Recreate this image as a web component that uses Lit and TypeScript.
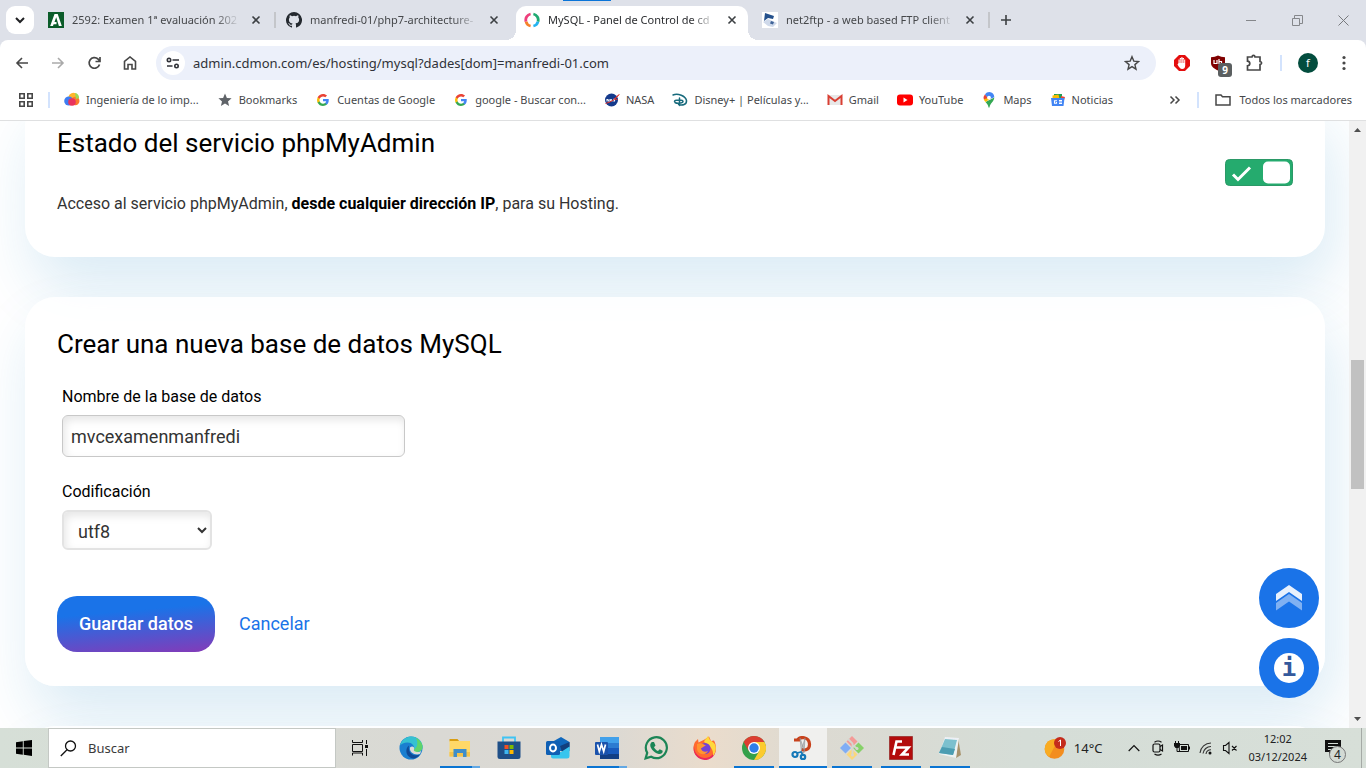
import { LitElement, html, css, svg, nothing } from "lit";
import { customElement, state } from "lit/decorators.js";
import { classMap } from "lit/directives/class-map.js";

const icon = (size: number, body: unknown, box = size) => html`<svg width=${size} height=${size} viewBox="0 0 ${box} ${box}" fill="none" aria-hidden="true">${body}</svg>`;

const googleG = () => icon(12, svg`
  <path fill="#4285f4" d="M47 24.5c0-1.600-.1-3.200-.4-4.700H24v9h12.900c-.6 3-2.300 5.500-4.800 7.200v6h7.800C44.400 38 47 31.800 47 24.500z"/>
  <path fill="#34a853" d="M24 48c6.500 0 11.900-2.100 15.900-5.800l-7.800-6c-2.100 1.500-4.900 2.300-8.100 2.300-6.200 0-11.500-4.200-13.400-9.900h-8v6.200C6.600 42.600 14.600 48 24 48z"/>
  <path fill="#fbbc05" d="M10.600 28.600a14.400 14.400 0 0 1 0-9.200v-6.200h-8a24 24 0 0 0 0 21.600z"/>
  <path fill="#ea4335" d="M24 9.500c3.500 0 6.700 1.200 9.200 3.600l6.900-6.900C35.900 2.400 30.500 0 24 0 14.600 0 6.600 5.400 2.600 13.200l8 6.200C12.500 13.700 17.800 9.500 24 9.500z"/>`, 48);

interface Tab { title: string; active?: boolean; glyph: () => unknown; }
const tabs: Tab[] = [
  { title: "2592: Examen 1ª evaluación 202", glyph: () => icon(16, svg`<path fill="#0b5c2a" d="M0 0h16v16H0z"/><path fill="#fff" d="M6.500 2h3.200l4.100 12h-2.900L8.200 5.200 6.500 10h2v2.300H5.600L5 14H2.200z"/>`) },
  { title: "manfredi-01/php7-architecture-", glyph: () => icon(16, svg`<path fill="#24292f" d="M8 0a8 8 0 0 0-2.530 15.590c.4.070.55-.17.55-.38v-1.490c-2.230.48-2.690-.94-2.690-.94-.36-.93-.89-1.170-.89-1.170-.73-.5.050-.49.050-.49.800.060 1.230.83 1.230.83.710 1.230 1.870.87 2.330.66.070-.52.280-.87.500-1.070-1.780-.2-3.640-.89-3.640-3.950 0-.87.310-1.590.82-2.150-.08-.2-.36-1.020.080-2.120 0 0 .67-.21 2.200.82a7.600 7.600 0 0 1 4 0c1.530-1.040 2.200-.82 2.200-.82.440 1.100.160 1.920.080 2.120.510.560.820 1.270.820 2.150 0 3.070-1.870 3.750-3.650 3.950.290.250.540.730.540 1.480v2.190c0 .21.150.46.550.38A8 8 0 0 0 8 0z"/>`) },
  { title: "MySQL - Panel de Control de cd", active: true, glyph: () => icon(16, svg`<g stroke-width="2.800"><path stroke="#f5822a" d="M6.600 14A6 6 0 0 1 2 9.500"/><path stroke="#ee3f7c" d="M2 9.500a6 6 0 0 1 4.600-7.500"/><path stroke="#24b3f0" d="M9.400 14a6 6 0 0 0 4.600-4.500"/><path stroke="#1fa971" d="M14 9.500A6 6 0 0 0 9.400 2"/></g>`) },
  { title: "net2ftp - a web based FTP client", glyph: () => icon(16, svg`<path fill="#fff" d="M0 0h16v16H0z"/><path fill="#24508c" d="M3 1l9 3-1 3-5-1-4 3z"/><path fill="#cfd9ea" d="M1 10l5-3 9 4-4 4-5-1z"/><path fill="#3f6398" d="M9 9l3 1-1 2.500-3-1z"/>`) },
];

interface Bookmark { text: string; glyph: () => unknown; }
const bookmarks: Bookmark[] = [
  { text: "Ingeniería de lo imp...", glyph: () => icon(16, svg`<circle cx="9.500" cy="6" r="5.200" fill="#ffb52b"/><circle cx="4.800" cy="9" r="4.600" fill="#3d7df2"/><circle cx="11.300" cy="9" r="4.200" fill="#fb7a2c"/><circle cx="8" cy="10" r="3.800" fill="#e9335d"/><path fill="#9bd957" d="M11 1a5 5 0 0 1 4 5l-3 1z"/>`) },
  { text: "Bookmarks", glyph: () => icon(16, svg`<path fill="#5f6368" d="M8 1.600l1.900 4.300 4.700.4-3.600 3.100 1.100 4.600L8 11.500 3.900 14 5 9.400 1.400 6.300l4.700-.4z"/>`) },
  { text: "Cuentas de Google", glyph: googleG },
  { text: "google - Buscar con...", glyph: googleG },
  { text: "NASA", glyph: () => icon(16, svg`<circle cx="7.500" cy="8" r="6.500" fill="#153a8c"/><path stroke="#fff" d="M3 9.500V7l2 2.500V7M6 9.500L7 7l1 2.500M11 7.200H9.500L11 9H9.300"/><path stroke="#e0312d" d="M1.500 11.500C7 10 12 7 15 2.500l-4.500 4.500 3 .5"/>`) },
  { text: "Disney+ | Películas y...", glyph: () => icon(16, svg`<path stroke="#176a7c" stroke-width="1.500" stroke-linecap="round" d="M1 3C6 1 13.500 4 14.500 8.500c.4 4.200-4 5-8 4M7.500 6v7.500M2.500 9.500C2.500 7.500 11 7.500 11 9.500c0 1.500-5.500 2.500-8 1"/>`) },
  { text: "Gmail", glyph: () => icon(16, svg`<path fill="#e8e8e8" d="M1 3h14v10H1z"/><path stroke="#d93f33" stroke-width="2" d="M1.500 13V4L8 9l6.500-5v9"/>`) },
  { text: "YouTube", glyph: () => icon(16, svg`<rect y="2.500" width="16" height="11" rx="3" fill="#f00"/><path fill="#fff" d="M6.500 5.600v4.800l4-2.400z"/>`) },
  { text: "Maps", glyph: () => icon(16, svg`<path fill="#34a853" d="M13.300 5.500C13 10 9 11 8.500 15.500h-1C7.300 13 6 12 4.500 10z"/><path fill="#fbbc04" d="M4.500 10c-1-1-1.600-2-1.700-3l4-4 3.700 3z"/><path fill="#ea4335" d="M4 2.300a5.500 5.500 0 0 0-1.200 5L7 6z"/><path fill="#4285f4" d="M4 2.300A5.500 5.500 0 0 1 9.500.2c2 .4 3.700 2 3.800 5L9 7 6 5z"/><circle cx="8" cy="5.700" r="1.900" fill="#fff"/>`) },
  { text: "Noticias", glyph: () => icon(16, svg`<path fill="#1e9e55" d="M4 2h8v5H4z"/><path fill="#fbbc04" d="M2.500 3.500l6-1 1 4h-7z"/><path fill="#ea4335" d="M11 4l4 1-1 3h-3z"/><path fill="#4285f4" d="M1 6h13.500l-1 8H2z"/><path stroke="#fff" stroke-width="1.100" d="M7 8.700H4.500v2.600h2V10M9 8.500h3M9 10h3M9 11.500h3"/>`) },
];

interface App { name: string; run?: "wide" | "many"; focus?: boolean; glyph: () => unknown; }
const apps: App[] = [
  { name: "Edge", glyph: () => icon(24, svg`<circle cx="12" cy="12" r="11.500" fill="#1a7fd0"/><path fill="#35c1d1" d="M1 9.500C3 3 8 .5 12.500.5 19 .5 24 6 23.500 11.500 23 15 20 16 17 16c-2 0-3-1-2-2.500C16 10 13 6.500 8.500 6.500 5 6.500 2 8 1 9.500z"/><path fill="#5fd46a" d="M17 2c4 2 7 6 6.500 9.500C23 15 20 16 17 16c-2 0-3-1-2-2.500 4-2 4-8 2-11.500z"/><path fill="#0f4a96" d="M10 9.500c-4 3-3.500 10 2 12.500 3 1.300 7-.5 9-3.500-6 2.500-12.500-1-11-9z"/><path fill="#dcdad6" d="M11 11.500c2-2 5-.5 4 2-1.200 2.500 5 3.500 7.300 1.300L21 18c-5 1.700-11-1.500-10-6.500z"/>`) },
  { name: "Explorador de archivos", run: "many", glyph: () => icon(24, svg`<path fill="#d99e12" d="M1.500 3h8l2 2.500h-10z"/><path fill="#ffd868" d="M1.500 5h20.500v15.500H1.500z"/><path fill="#f5c34b" d="M1.500 16h20.500v4.500H1.500z"/><path fill="#3f8ecb" d="M5.500 21v-8h13v8h-3.500v-4H9v4z"/>`) },
  { name: "Store", glyph: () => icon(24, svg`<path stroke="#3fc4f4" stroke-width="1.800" d="M6 6V1.500h12V6"/><path fill="#1f4f87" d="M.5 5.500h23v15q0 2.500-2.500 2.500H3q-2.500 0-2.500-2.500z"/><path fill="#f25022" d="M7.500 9H11.500v4h-4z"/><path fill="#7fba00" d="M12.500 9h4v4h-4z"/><path fill="#3fb7f0" d="M7.500 14h4v4h-4z"/><path fill="#ffb900" d="M12.500 14h4v4h-4z"/>`) },
  { name: "Outlook", glyph: () => icon(24, svg`<path fill="#1068bd" d="M6 6l9-5 8.500 5v9H6z"/><path fill="#123f7d" d="M14 10l9.500-4v5L16 16z"/><path fill="#37c5ee" d="M5 13l10 3 8.500-5.500V20q0 2.500-2.500 2.500H7q-2 0-2-2z"/><rect y="5" width="14" height="14" rx="1.500" fill="#0f5fb4"/><ellipse cx="7" cy="12" rx="3" ry="3.400" stroke="#fff" stroke-width="2"/>`) },
  { name: "Word", run: "many", glyph: () => icon(24, svg`<path fill="#41a0ea" d="M5 1h19v6H5z"/><path fill="#2c7bd1" d="M5 7h19v5H5z"/><path fill="#185abd" d="M5 12h19v6H5z"/><path fill="#123f85" d="M5 18h19v5H5z"/><rect y="6" width="13" height="13" rx="1" fill="#1a52ac"/><path stroke="#fff" stroke-width="1.700" d="M2.500 8.500l1.800 7 2.200-7 2.200 7 1.800-7"/>`) },
  { name: "WhatsApp", glyph: () => icon(24, svg`<path stroke="#1c8556" stroke-width="2.200" d="M1.600 22.400l1.600-5.600a10.500 10.500 0 1 1 4 4z"/><path fill="#1c8556" d="M8 6h2l1.500 3.500-1.500 1.700c1 2 2.300 3 4 3.800l1.700-1.700 3 1.500c.3 3-2.700 3.700-4.700 3C10 16.500 7 13 6.300 10 6 8 7 6.500 8 6z"/>`) },
  { name: "Firefox", glyph: () => icon(24, svg`<path fill="#ff6a2f" d="M2 6l3-3 .5 3.500 6-3L16 .5l2 4.500 3-.5c4 7 2 18.500-9 18.500C2 23-2 14 2 6z"/><path fill="#e9285c" d="M1 10c0 8 6 12 11 12s10-4 10.500-10c1 8-5 12-11 12C4 23-.5 17 1 10z"/><path fill="#ffd83a" d="M11 6c1-3 3-4 4-6l2 4 4 3c3 4 2 10-1 13 1-6-3-11-9-14z"/><circle cx="12" cy="12.500" r="5.500" fill="#7542d5"/><path fill="#ff9530" d="M4 8c4-2 7 0 9 2-3 0-3 2-5 2 0 3 4 5 7 3-2 5-11 4-11-3z"/>`) },
  { name: "Chrome", run: "wide", glyph: () => icon(24, svg`<circle cx="12" cy="12" r="12" fill="#34a04a"/><path fill="#dc3e31" d="M1.600 6A12 12 0 0 1 22.400 6H12L6.800 15z"/><path fill="#fccb2f" d="M22.400 6A12 12 0 0 1 12 24l5.200-9L12 6z"/><circle cx="12" cy="12" r="6" fill="#fff"/><circle cx="12" cy="12" r="4.700" fill="#2f7de9"/>`) },
  { name: "Recortes", run: "wide", focus: true, glyph: () => icon(24, svg`<path stroke="#c8421c" stroke-width="3.200" d="M3 4h6M6 4.500C9 0 18 .5 18.500 8c.2 5-3.500 7-8 5.500"/><path fill="#c9c9c6" stroke="#8a8f94" stroke-width=".6" d="M9 2l4.500 13-3 2zM14 2l-4 14 3 1z"/><circle cx="4" cy="18.500" r="2.500" stroke="#1679b8" stroke-width="2.200"/><circle cx="12" cy="21" r="2.200" stroke="#1679b8" stroke-width="2.200"/><path stroke="#1679b8" stroke-width="1.600" d="M6 17l4-1 2 3"/>`) },
  { name: "Git", run: "wide", glyph: () => icon(24, svg`<path fill="#f49a97" d="M12 0l5.500 5.500L12 11 6.500 5.500z"/><path fill="#80adf5" d="M5.500 6.500L11 12l-5.500 5.500L0 12z"/><path fill="#86d169" d="M18.500 6.500L24 12l-5.500 5.500L13 12z"/><path fill="#fbd77b" d="M12 13l5.500 5.500L12 24l-5.500-5.500z"/><path stroke="#d6d6cf" stroke-width="1.800" d="M8 3l4.500 4.500V19M12.500 9l5 4"/><circle cx="12.500" cy="19" r="1.500" fill="#d6d6cf"/><circle cx="17" cy="12.500" r="1.500" fill="#d6d6cf"/>`) },
  { name: "FileZilla", run: "wide", glyph: () => icon(24, svg`<path fill="#b30b0b" stroke="#7e0606" stroke-dasharray="1 1" d="M.5.5h23v23H.5z"/><path stroke="#fff" stroke-width="2.600" d="M13 5.500H7.500L4.500 19M6.500 11.500H12M12 11.500h7.500L13 18.500h7"/>`) },
  { name: "Bloc de notas", run: "wide", glyph: () => icon(24, svg`<path fill="#a8936d" d="M20 2l3 17-5 3z"/><path fill="#edf2f2" d="M7 1l14 1-3 20L1 18z"/><path fill="#7cc0ce" d="M7 3l12 1-4 15L1 17z"/><path fill="#4c9db2" d="M4 11l13 2-2 6L1 17z"/><path stroke="#eef" stroke-dasharray="1 1" d="M7 2l13 1"/>`) },
];

@customElement("browser-chrome")
export class BrowserChrome extends LitElement {
  static styles = css`
    :host { display: block; background: #dee1e9; color: #45474a; font: 11px/16px "Noto Sans", "Open Sans", sans-serif; position: relative; }
    button { font: inherit; color: inherit; background: none; border: 0; padding: 0; display: flex; align-items: center; justify-content: center; flex: none; }
    svg { display: block; flex: none; }
    a { color: inherit; text-decoration: none; }
    .progress { position: absolute; left: 563px; top: 0; width: 48px; height: 1px; background: #0a74d8; }
    .strip { display: flex; height: 40px; padding-left: 6px; align-items: center; }
    .search { width: 28px; height: 28px; border-radius: 9px; background: #fff; margin-right: 4px; }
    .tab { width: 238px; height: 40px; box-sizing: border-box; flex: 0 1 238px; min-width: 0; display: flex; align-items: center; padding: 0 10px; position: relative; }
    .tab.active { color: #2b2d30; z-index: 1; }
    .tab.active::before { content: ""; position: absolute; inset: 6px 4px 0 2px; background: #fff; border-radius: 10px 10px 0 0; z-index: -1; }
    .tab.active::after { content: ""; position: absolute; left: -8px; right: -6px; bottom: 0; height: 10px; z-index: -1;
      background: radial-gradient(circle at 0 0, transparent 10px, #fff 10px) left / 10px 10px no-repeat, radial-gradient(circle at 100% 0, transparent 10px, #fff 10px) right / 10px 10px no-repeat; }
    .title { flex: 1; min-width: 0; margin-left: 8px; overflow: hidden; white-space: nowrap; -webkit-mask-image: linear-gradient(90deg, #000 85%, transparent); mask-image: linear-gradient(90deg, #000 85%, transparent); }
    .shut { width: 16px; height: 16px; margin-left: 8px; margin-right: 2px; }
    .line { width: 2px; height: 16px; background: #c4c6ca; position: absolute; right: 0; }
    .plus { width: 32px; height: 32px; }
    .window { margin-left: auto; display: flex; }
    .window button { width: 46px; height: 40px; }
    .bars { background: #fff; border-radius: 8px 8px 0 0; border-bottom: 1px solid #dfe0e1; }
    .nav { display: flex; height: 46px; align-items: center; padding: 0 4px; }
    .nav > button { width: 36px; height: 36px; }
    .address { flex: 1; min-width: 0; display: flex; align-items: center; height: 34px; border-radius: 17px; background: #ecf0fa; margin: 0 8px; padding: 0 16px 0 5px; }
    .site { width: 24px; height: 24px; border-radius: 12px; background: #fff; margin-right: 8px; }
    .url { flex: 1; min-width: 0; border: 0; padding: 0; background: none; font: 13px/20px "Noto Sans", "Open Sans", sans-serif; color: #303238; outline: 0; }
    .ext { position: relative; }
    .count { position: absolute; left: 18px; top: 18px; width: 14px; height: 14px; border-radius: 3px; background: #5b5f60; color: #fff; font-size: 10px; line-height: 14px; font-weight: 700; }
    .rule { width: 2px; height: 16px; background: #d3e3fd; flex: none; margin: 0 8px; }
    .avatar { width: 20px; height: 20px; border-radius: 10px; background: #034d3e; color: #fff; line-height: 20px; }
    .marks { display: flex; align-items: center; height: 34px; box-sizing: border-box; padding: 0 14px 6px 18px; }
    .marks .rule { margin: 0 14px; }
    .mark { display: flex; align-items: center; gap: 6px; margin-right: 18px; white-space: nowrap; }
    .mark svg { width: 16px; }
    .more { margin-left: auto; margin-right: 2px; }
    .all { margin-left: 2px; margin-right: 0; gap: 8px; }
  `;

  render() {
    return html`
      <div class="strip">
        <button class="search" aria-label="Buscar pestañas">${icon(12, svg`<path stroke="#202124" stroke-width="2" d="M2 4l4 4 4-4"/>`)}</button>
        ${tabs.map((t, i) => html`<div class=${classMap({ tab: true, active: !!t.active })}>
          ${t.glyph()}<span class="title">${t.title}</span>
          <button class="shut" aria-label="Cerrar">${icon(10, svg`<path stroke="#3c4043" stroke-width="1.600" d="M1.500 1.500l7 7M8.500 1.500l-7 7"/>`)}</button>
          ${i === 0 || i === 3 ? html`<span class="line"></span>` : nothing}
        </div>`)}
        <button class="plus" aria-label="Nueva pestaña">${icon(12, svg`<path stroke="#3c4043" stroke-width="1.600" d="M6 1v10M1 6h10"/>`)}</button>
        <div class="window">
          <button aria-label="Minimizar">${icon(10, svg`<path stroke="#85878b" d="M0 5.500h10"/>`)}</button>
          <button aria-label="Restaurar">${icon(11, svg`<path stroke="#85878b" d="M.5 3.500h7v7h-7zM2.500 3.500v-3h8v8h-3"/>`)}</button>
          <button aria-label="Cerrar ventana">${icon(11, svg`<path stroke="#77797d" d="M.5.5l10 10M10.500.5l-10 10"/>`)}</button>
        </div>
      </div>
      <div class="bars">
        <div class="nav">
          <button aria-label="Atrás">${icon(14, svg`<path stroke="#474747" stroke-width="1.600" d="M13 7H2M7 2L2 7l5 5"/>`)}</button>
          <button aria-label="Adelante">${icon(14, svg`<path stroke="#aaa" stroke-width="1.600" d="M1 7h11M7 2l5 5-5 5"/>`)}</button>
          <button aria-label="Recargar">${icon(14, svg`<path stroke="#474747" stroke-width="1.700" d="M12.500 8.500A5.300 5.300 0 1 1 11 3l1.700 2M13 1v4.500H8.500"/>`)}</button>
          <button aria-label="Inicio">${icon(14, svg`<path stroke="#474747" stroke-width="1.600" d="M1.500 13V5.500L7 1l5.500 4.500V13H9V8.500H5V13z"/>`)}</button>
          <div class="address">
            <button class="site" aria-label="Información del sitio">${icon(14, svg`<g stroke="#303238" stroke-width="1.600"><circle cx="3" cy="4" r="1.700"/><path d="M6.500 4H13M1 10h5.500"/><circle cx="10.500" cy="10" r="1.700"/></g>`)}</button>
            <input class="url" aria-label="Dirección" .value=${"admin.cdmon.com/es/hosting/mysql?dades[dom]=manfredi-01.com"} />
            <button aria-label="Añadir a marcadores">${icon(16, svg`<path stroke="#474747" stroke-width="1.400" d="M8 1.700l1.800 4.400 4.700.4-3.600 3.100 1.100 4.600L8 11.700 4 14.200l1.100-4.600L1.500 6.500l4.700-.4z"/>`)}</button>
          </div>
          <button aria-label="Bloqueador">${icon(16, svg`<path fill="#e40d0d" d="M5 0h6l5 5v6l-5 5H5l-5-5V5z"/><path fill="#fff" d="M4.500 8V4.500h1.300V3h1.400V2.300h1.400V3H10v1.500h1.200v6.200c0 2-1.200 3.300-3 3.300-2 0-3-1.600-4.700-4.500z"/><path stroke="#e40d0d" stroke-width=".6" d="M6 4v4M7.900 3.500V8M9.800 4v4"/>`)}</button>
          <button class="ext" aria-label="uBlock">${icon(16, svg`<path fill="#800000" d="M8 .5Q5 2 1 2.200V8c0 4 4 6 7 7.500 3-1.500 7-3.500 7-7.500V2.200Q11 2 8 .5z"/><path stroke="#fff" stroke-width="1.200" d="M4 5v3.500h3V5M9 4v4.500h2.500V6.500H9"/>`)}<span class="count">9</span></button>
          <button aria-label="Extensiones">${icon(18, svg`<path stroke="#474747" stroke-width="1.700" d="M2.500 3h4.500q.2-1.600 1.500-1.600T10 3h5v4.500q1.600.2 1.600 1.500T15 10.500V16H2.500v-4.200q2.300-.3 2.300-2.300T2.500 7.200z"/>`)}</button>
          <span class="rule"></span>
          <button aria-label="Perfil"><span class="avatar">f</span></button>
          <button aria-label="Menú">${icon(16, svg`<g fill="#474747"><circle cx="8" cy="2.500" r="1.600"/><circle cx="8" cy="8" r="1.600"/><circle cx="8" cy="13.500" r="1.600"/></g>`)}</button>
        </div>
        <div class="marks">
          <button aria-label="Aplicaciones">${icon(16, svg`<path stroke="#474747" stroke-width="1.600" d="M1.800 1.800h4.400v4.400H1.800zM9.800 1.800h4.400v4.400H9.800zM1.800 9.800h4.400v4.400H1.800zM9.800 9.800h4.400v4.400H9.800z"/>`)}</button>
          <span class="rule"></span>
          ${bookmarks.map((b) => html`<a class="mark" href="#">${b.glyph()}${b.text}</a>`)}
          <button class="more" aria-label="Más marcadores">${icon(12, svg`<path stroke="#474747" stroke-width="1.500" d="M1.500 2.500L5 6l-3.500 3.500M6.500 2.500L10 6l-3.500 3.500"/>`)}</button>
          <span class="rule"></span>
          <a class="mark all" href="#">${icon(16, svg`<path stroke="#474747" stroke-width="1.500" d="M1 13V3h5l1.500 1.800H15V13z"/>`)}Todos los marcadores</a>
        </div>
      </div>
      <span class="progress"></span>`;
  }
}

@customElement("hosting-page")
export class HostingPage extends LitElement {
  static styles = css`
    :host { display: flex; min-height: 0; position: relative; background: #fff; font: 16px/24px Roboto, sans-serif; color: #333; }
    .view { flex: 1; min-width: 0; overflow: hidden; padding: 0 24px 0 25px; }
    .scrolled { margin-top: -25px; display: grid; gap: 40px; }
    .card { position: relative; background: rgba(255, 255, 255, 0.82); border-radius: 30px; padding: 32px; box-shadow: 8px 30px 60px rgba(25, 129, 195, 0.16); }
    .status { display: flex; align-items: center; justify-content: space-between; background: #fff; }
    .next { height: 80px; }
    h2 { margin: 0; font-size: 26px; line-height: 30px; font-weight: 400; color: #000; }
    p { margin: 34px 0 9px; }
    b { color: #000; }
    .toggle { position: relative; width: 68px; height: 27px; margin-bottom: 8px; }
    .toggle input { position: absolute; inset: 0; width: 100%; height: 100%; margin: 0; opacity: 0; }
    .toggle svg { display: block; }
    form { padding: 4px 0 2px; }
    .field { padding-left: 5px; display: grid; justify-items: start; gap: 8px; margin-top: 24px; }
    .field + .field { margin-top: 25px; }
    .field label { line-height: 20px; color: #000; }
    .text, .pick { box-sizing: border-box; font: 18px/24px Roboto, sans-serif; color: #333; border-radius: 6px; background: #fff; box-shadow: inset 2px 4px 8px rgba(0, 0, 0, 0.1); outline: 0; }
    .text { width: 343px; height: 42px; padding: 0 8px; border: 1px solid #c8c8c8; }
    .pick { width: 150px; height: 40px; border: 2px solid #e3e3e3; padding: 2px 0 0 10px; }
    .actions { display: flex; align-items: center; gap: 24px; margin-top: 46px; font-size: 18px; }
    .save { font: 500 18px/24px Roboto, sans-serif; color: #fff; border: 0; padding: 16px 22px; border-radius: 20px; background: linear-gradient(175deg, #1a73e8 30%, #843ab8); }
    .cancel { color: #1a73e8; text-decoration: none; }
    .float { position: absolute; right: 47px; bottom: 30px; display: grid; gap: 10px; }
    .round { width: 60px; height: 60px; border: 0; padding: 0; border-radius: 30px; background: #1a73e8; display: grid; place-items: center; }
    .badge { width: 30px; height: 30px; border-radius: 15px; background: #fff; color: #34599c; font: 700 24px/30px "DejaVu Sans Mono", monospace; }
    .rail { width: 17px; box-sizing: border-box; background: #f1f1f1; display: flex; flex-direction: column; align-items: center; padding: 7px 0; }
    .thumb { width: 13px; flex: 0 0 129px; background: #c1c1c1; }
    .above { flex: 228; } .below { flex: 228; }
    .rail svg { display: block; flex: none; }
  `;
  @state() private enabled = true;

  render() {
    return html`
      <main class="view"><div class="scrolled">
        <section class="card status">
          <div><h2>Estado del servicio phpMyAdmin</h2>
            <p>Acceso al servicio phpMyAdmin, <b>desde cualquier dirección IP</b>, para su Hosting.</p></div>
          <label class="toggle">
            <input type="checkbox" aria-label="Servicio phpMyAdmin" .checked=${this.enabled} @change=${() => (this.enabled = !this.enabled)} />
            <svg width="68" height="27" fill="none" aria-hidden="true"><rect x=".5" y=".5" width="67" height="26" rx="4" fill=${this.enabled ? "#25ab6e" : "#999"} stroke="#2b9967"/><rect x=${this.enabled ? 38 : 3} y="2.500" width="27" height="22" rx="5" fill="#fff"/>${this.enabled ? svg`<path stroke="#fff" stroke-width="3" d="M8 15.500l5 5L25 8.500"/>` : nothing}</svg>
          </label>
        </section>
        <section class="card">
          <h2>Crear una nueva base de datos MySQL</h2>
          <form @submit=${(e: Event) => e.preventDefault()}>
            <div class="field"><label for="name">Nombre de la base de datos</label><input class="text" id="name" .value=${"mvcexamenmanfredi"} /></div>
            <div class="field"><label for="enc">Codificación</label><select class="pick" id="enc"><option>utf8</option></select></div>
            <div class="actions"><button class="save">Guardar datos</button><a class="cancel" href="#">Cancelar</a></div>
          </form>
        </section>
        <section class="card next"></section>
      </div></main>
      <div class="rail">
        <svg width="7" height="4"><path fill="#505050" d="M0 4h7L3.500 0z"/></svg>
        <span class="above"></span><span class="thumb"></span><span class="below"></span>
        <svg width="7" height="4"><path fill="#505050" d="M0 0h7L3.500 4z"/></svg>
      </div>
      <div class="float">
        <button class="round" aria-label="Subir">${icon(26, svg`<path fill="#e8f1fd" d="M0 9l13-9 13 9v7L13 7 0 16z"/><path fill="#80b1f2" d="M0 18l13-9 13 9v7.500L13 16.500 0 25.500z"/>`)}</button>
        <button class="round" aria-label="Información"><span class="badge">i</span></button>
      </div>`;
  }
}

@customElement("task-bar")
export class TaskBar extends LitElement {
  static styles = css`
    :host { display: flex; height: 40px; background: linear-gradient(90deg, #d6dfd7, #dad9d4 32%, #dcd9d3 45%, #eadccc 52%, #dcdad2 60%, #d5ddd7 75%, #d7dfd8); font: 13px/18px "Noto Sans", "Open Sans", sans-serif; color: #222; }
    button { border: 0; background: none; padding: 0; display: flex; align-items: center; justify-content: center; font: inherit; color: inherit; flex: none; }
    svg { display: block; flex: none; }
    .slot { width: 48px; }
    .find { display: flex; align-items: center; flex: 0 1 288px; box-sizing: border-box; background: #fff; border: 1px solid #c4c8c4; padding-left: 11px; gap: 11px; }
    .find input { border: 0; padding: 0; min-width: 0; flex: 1; background: none; font: inherit; outline: 0; }
    .find input::placeholder { color: #3a3a3a; opacity: 1; }
    .apps { display: flex; gap: 1px; margin-left: 3px; }
    .app { width: 48px; background: linear-gradient(#0a74d2, #0a74d2) bottom / 0 2px no-repeat; }
    .wide { background-size: 40px 2px; }
    .many { background: linear-gradient(90deg, #0a74d2 80%, #62a8e4 80%) bottom / 40px 2px no-repeat; }
    .focus { background: linear-gradient(#0a74d2, #0a74d2) bottom / 48px 2px no-repeat, #f0f0ee; }
    .tray { margin-left: auto; display: flex; align-items: center; }
    .weather { gap: 8px; margin-right: 20px; }
    .small { width: 24px; height: 40px; }
    .clock { font-size: 11px; line-height: 18px; text-align: center; margin: 0 14px 0 6px; }
    .clock div { height: 18px; }
    .note { position: relative; width: 24px; height: 40px; }
    .num { position: absolute; left: 8px; top: 18px; width: 15px; height: 15px; border: 1px solid #777; border-radius: 9px; background: #d3dad4; font-size: 12px; line-height: 15px; }
    .edge { width: 4px; margin-left: 16px; height: 40px; border-left: 1px solid #a5aaa6; }
  `;
  render() {
    return html`
      <button class="slot" aria-label="Inicio">${icon(16, svg`<path fill="#000" d="M0 2.300L6.800 1.200v6.300H0zM7.700 1L16 0v7.500H7.700zM0 8.400h6.800v6.300L0 13.700zM7.700 8.400H16V16l-8.300-1.200z"/>`)}</button>
      <label class="find">${icon(17, svg`<circle cx="10.500" cy="6" r="5" stroke="#111" stroke-width="1.300"/><path stroke="#111" stroke-width="1.300" d="M7 9.800L.8 16"/>`)}<input aria-label="Buscar" placeholder="Buscar" /></label>
      <button class="slot" aria-label="Vista de tareas">${icon(16, svg`<path stroke="#111" d="M.5 0v2.500h10V0M.5 4.500h10v7H.5zM.5 15.500v-2.500h10v2.500M14.500 0v4M14.500 9v7"/><path fill="#111" d="M13 5h3v3h-3z"/>`)}</button>
      <div class="apps">${apps.map((a) => html`<button class=${classMap({ app: true, wide: a.run === "wide", many: a.run === "many", focus: !!a.focus })} aria-label=${a.name}>${a.glyph()}</button>`)}</div>
      <div class="tray">
        <button class="weather"><svg width="22" height="22" fill="none" aria-hidden="true"><circle cx="10.500" cy="12" r="9.800" fill="#f38d1f"/><path fill="#f9ac22" d="M2 7a10 10 0 0 1 12-4L5 20A10 10 0 0 1 2 7z"/><circle cx="16" cy="6" r="6" fill="#c42b1c"/><path stroke="#fff" d="M14.500 4.500l2-1.500v6"/></svg>14°C</button>
        <button class="small" aria-label="Mostrar iconos">${icon(12, svg`<path stroke="#111" stroke-width="1.200" d="M.7 9L6 3.500 11.300 9"/>`)}</button>
        <button class="small" aria-label="Reunión">${icon(16, svg`<g stroke="#111" stroke-width="1.200"><path d="M4.500 2.200q3.500-2.400 7 0M4.500 14q3.500 2.400 7 0"/><rect x="3" y="4" width="7" height="8" rx="1.500"/><path d="M10 6.500L12.500 5v6L10 9.500"/></g>`)}</button>
        <button class="small" aria-label="Batería">${icon(16, svg`<path stroke="#111" d="M5 4.500h9.500v7h-9z"/><path fill="#111" d="M7 6h6v4H7zM14.500 6.500H16v3h-1.500zM0 3h6v3L4.500 8h-3L0 6z"/><path stroke="#111" d="M1.500 1v3M4.500 1v3M3 8v3.500h3"/>`)}</button>
        <button class="small" aria-label="Red">${icon(14, svg`<g stroke="#333" stroke-width="1.100"><path d="M1 12A11 11 0 0 1 12 2M4 12.500A8 8 0 0 1 12 5.500M7 13a5 5 0 0 1 5-4.200"/></g><circle cx="11" cy="12" r="1.500" fill="#111"/>`)}</button>
        <button class="small" aria-label="Volumen">${icon(16, svg`<path stroke="#111" stroke-width="1.100" d="M1.500 5.500h2L7 2.500v11l-3.500-3h-2zM10 6l4.500 4.500M14.500 6L10 10.500"/>`)}</button>
        <div class="clock"><div>12:02</div><div>03/12/2024</div></div>
        <button class="note" aria-label="Notificaciones">${icon(16, svg`<path fill="#111" d="M0 0h16v12H7l-3 3.500V12H0z"/><path stroke="#d5ddd7" d="M3 3.500h10M3 6.500h10M3 9.500h7"/>`)}<span class="num">4</span></button>
        <span class="edge"></span>
      </div>`;
  }
}

@customElement("app-root")
export class AppRoot extends LitElement {
  static styles = css`
    :host { display: grid; grid-template-rows: auto minmax(0, 1fr) auto; height: 100vh; overflow: hidden; }
  `;
  render() {
    return html`<browser-chrome></browser-chrome><hosting-page></hosting-page><task-bar></task-bar>`;
  }
}
